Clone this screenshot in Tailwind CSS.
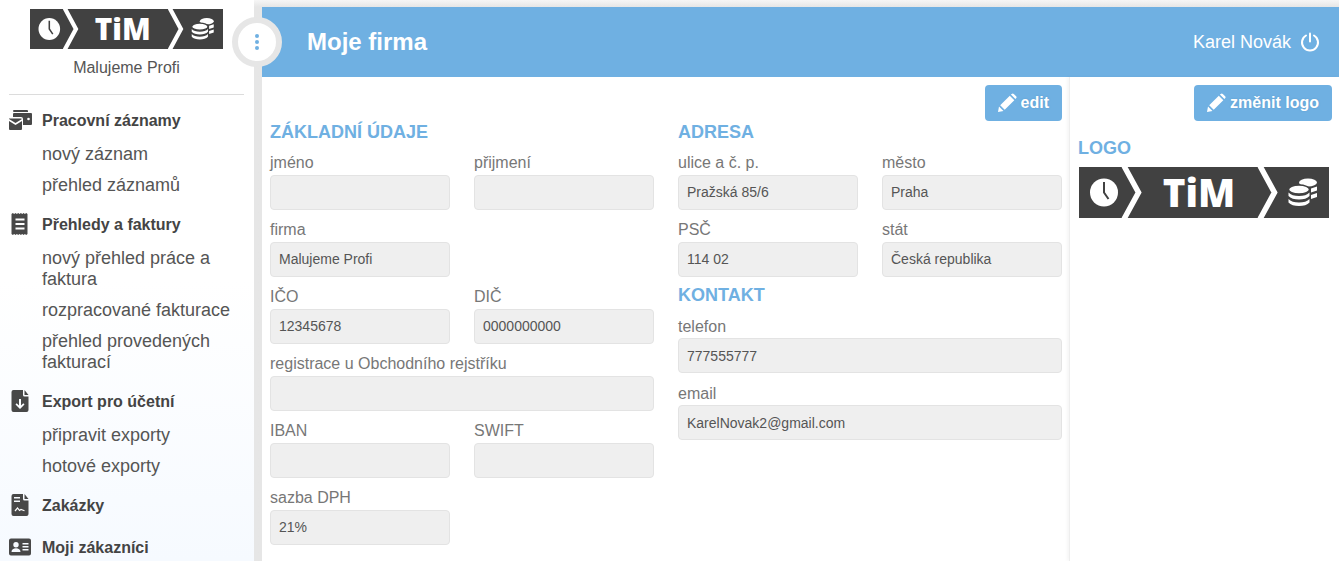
<!DOCTYPE html>
<html lang="cs">
<head>
    <meta charset="UTF-8">
    <meta name="viewport" content="width=device-width, initial-scale=1.0">
    <title>TiM - Moje firma</title>
    <script src="https://cdn.jsdelivr.net/npm/@tailwindcss/browser@4"></script>
</head>
<body class="h-[561px] overflow-hidden bg-[#e8e8e8] font-['Liberation_Sans',Arial,sans-serif]">
    <div class="relative flex h-[561px] overflow-hidden bg-gradient-to-b from-[#f6f6f6] to-[#e6e6e6] to-[7px]">
        <!-- Levý panel -->
        <aside class="w-[254px] shrink-0 h-full overflow-hidden px-[9px] pt-[9px] bg-gradient-to-b from-white from-50% to-[#f6faff] text-[#555]">
            <div class="flex justify-center pr-[1px]">
                <svg class="w-[193px] h-[40px]" viewBox="0 0 250 51" preserveAspectRatio="none">
                    <rect width="250" height="51" fill="#414141"/>
                    <circle cx="25" cy="25.500" r="14" fill="#fff"/>
                    <path d="M25 15v10.500l4.500 6.500" fill="none" stroke="#414141" stroke-width="2"/>
                    <path d="M45 -1l14.500 26.500L45 52M181 -1l14.500 26.500L181 52" fill="none" stroke="#fff" stroke-width="5.500"/>
                    <text x="120" y="40" text-anchor="middle" fill="#fff" font-size="38.500" font-weight="800" font-family="Open Sans">TiM</text>
                    <g fill="#fff">
                        <ellipse cx="229" cy="15.500" rx="9" ry="4"/>
                        <path d="M232 21.500l6-2v4l-6 2zM232 28l6-2v4l-6 2z"/>
                        <ellipse cx="220" cy="22.500" rx="10.500" ry="4.500" stroke="#414141" stroke-width="1.500"/>
                        <path d="M209.500 25.500c2 2.500 6 3.500 10.500 3.500s8.500-1 10.500-3.500v3.500c-2 2.500-6 3.500-10.500 3.500s-8.500-1-10.500-3.500zM209.500 32c2 2.500 6 3.500 10.500 3.500s8.500-1 10.500-3.500v3.500c-2 2.500-6 3.500-10.500 3.500s-8.500-1-10.500-3.500z"/>
                    </g>
                </svg>
            </div>
            <p class="mt-[8px] pr-[1px] text-center text-[16px] leading-[22px]">Malujeme Profi</p>
            <hr class="mt-[15px] mb-[11px] mr-[1px] border-t border-[#dcdcdc]">

            <nav class="-ml-[1px]">
                <section class="mb-[9px]">
                    <h3 class="flex items-center h-[28px] mb-[5px] gap-[10px] text-[16px] font-bold text-[#444]">
                        <svg class="w-[24px] h-[24px] shrink-0" viewBox="0 0 24 24" fill="#484848"><path d="M6 2h13a1 1 0 0 1 1 1v1H6a1 1 0 0 1 0-2z"/><path d="M6 5h17a1 1 0 0 1 1 1v10a1 1 0 0 1-1 1h-8v-6a2 2 0 0 0-2-2H5V6a1 1 0 0 1 1-1z"/><circle cx="20.500" cy="11" r="1.300" fill="#fff"/><path d="M1 10.500h12a1.500 1.500 0 0 1 1 .5L7.500 15 1 11z"/><path d="M1 13l6.500 4L14 13v8a1 1 0 0 1-1 1H2a1 1 0 0 1-1-1z"/></svg>
                        <span class="pt-[2px]">Pracovní záznamy</span>
                    </h3>
                    <ul class="pl-[34px] text-[18px] leading-[21px]">
                        <li class="py-[5px]">nový záznam</li>
                        <li class="py-[5px]">přehled záznamů</li>
                    </ul>
                </section>
                <section class="mb-[9px]">
                    <h3 class="flex items-center h-[28px] mb-[5px] gap-[10px] text-[16px] font-bold text-[#444]">
                        <svg class="w-[24px] h-[24px] shrink-0" viewBox="0 0 24 24" fill="#484848"><path fill-rule="evenodd" d="M3.500 2l1.300-1 1.400 1 1.300-1 1.400 1 1.300-1 1.300 1 1.400-1 1.300 1 1.400-1 1.300 1 1.300-1 1.300 1v20l-1.300 1-1.300-1-1.300 1-1.400-1-1.300 1-1.400-1-1.300 1-1.300-1-1.400 1-1.300-1-1.400 1-1.300-1zM7.500 6.500v2h9v-2zM7.500 11v2h9v-2zM7.500 15.500v2h9v-2z"/></svg>
                        <span class="pt-[2px]">Přehledy a faktury</span>
                    </h3>
                    <ul class="pl-[34px] pr-[10px] text-[18px] leading-[21px]">
                        <li class="py-[5px]">nový přehled práce a faktura</li>
                        <li class="py-[5px]">rozpracované fakturace</li>
                        <li class="py-[5px]">přehled provedených fakturací</li>
                    </ul>
                </section>
                <section class="mb-[9px]">
                    <h3 class="flex items-center h-[28px] mb-[5px] gap-[10px] text-[16px] font-bold text-[#444]">
                        <svg class="w-[24px] h-[24px] shrink-0" viewBox="0 0 24 24" fill="#484848"><path fill-rule="evenodd" d="M5.500 1H15v5a1.500 1.500 0 0 0 1.500 1.500h4V21a2 2 0 0 1-2 2h-13a2 2 0 0 1-2-2V3a2 2 0 0 1 2-2zM11 10v6.500L8.700 14.200l-1.200 1.200 4.500 4.500 4.500-4.500-1.200-1.200-2.300 2.300V10z"/><path d="M16.500 1l4 5h-4z"/></svg>
                        <span class="pt-[2px]">Export pro účetní</span>
                    </h3>
                    <ul class="pl-[34px] text-[18px] leading-[21px]">
                        <li class="py-[5px]">připravit exporty</li>
                        <li class="py-[5px]">hotové exporty</li>
                    </ul>
                </section>
                <section class="mb-[14px]">
                    <h3 class="flex items-center h-[28px] gap-[10px] text-[16px] font-bold text-[#444]">
                        <svg class="w-[24px] h-[24px] shrink-0" viewBox="0 0 24 24" fill="#484848"><path fill-rule="evenodd" d="M5.500 1H15v5a1.500 1.500 0 0 0 1.500 1.500h4V21a2 2 0 0 1-2 2h-13a2 2 0 0 1-2-2V3a2 2 0 0 1 2-2zM6 4v1.500h6V4zM6 7.500V9h6V7.500z"/><path d="M16.500 1l4 5h-4z"/><path d="M7 18l2.500-3 2 2.500 1.500-1 3.500 1.200" fill="none" stroke="#fff" stroke-width="1.200"/></svg>
                        <span class="pt-[2px]">Zakázky</span>
                    </h3>
                </section>
                <section>
                    <h3 class="flex items-center h-[28px] gap-[10px] text-[16px] font-bold text-[#444]">
                        <svg class="w-[24px] h-[24px] shrink-0" viewBox="0 0 24 24" fill="#484848"><path fill-rule="evenodd" d="M3 3.500h18a2 2 0 0 1 2 2v13a2 2 0 0 1-2 2H3a2 2 0 0 1-2-2v-13a2 2 0 0 1 2-2zM8 7a2.700 2.700 0 1 0 0 5.400A2.700 2.700 0 0 0 8 7zM3.500 17h9c0-2.500-2-3.700-4.500-3.700S3.500 14.500 3.500 17zM14.500 8v1.500h6V8zM14.500 11v1.500h6V11zM14.500 14v1.500h6V14z"/></svg>
                        <span class="pt-[2px]">Moji zákazníci</span>
                    </h3>
                </section>
            </nav>
        </aside>

        <!-- Přepínač panelu -->
        <button class="absolute left-[232px] top-[17px] flex flex-col items-center justify-center gap-[2px] w-[50px] h-[50px] rounded-full bg-white border-[6px] border-[#e6e6e6]">
            <span class="w-[4px] h-[4px] rounded-full bg-[#6fb0e2]"></span>
            <span class="w-[4px] h-[4px] rounded-full bg-[#6fb0e2]"></span>
            <span class="w-[4px] h-[4px] rounded-full bg-[#6fb0e2]"></span>
        </button>

        <!-- Hlavní obsah -->
        <main class="flex-1 ml-[8px] mt-[7px] flex flex-col bg-white min-w-0">
            <header class="h-[70px] shrink-0 flex items-center justify-between bg-[#6fb0e2] pl-[45px] pr-[19px] text-white">
                <h1 class="text-[24px] font-bold">Moje firma</h1>
                <div class="flex items-center gap-[9px]">
                    <span class="text-[18px]">Karel Novák</span>
                    <svg class="w-[20px] h-[20px]" viewBox="0 0 20 20" fill="none" stroke="#fff" stroke-width="2" stroke-linecap="round"><path d="M10 1.500v8"/><path d="M6 3.500a8 8 0 1 0 8 0"/></svg>
                </div>
            </header>

            <div class="flex flex-1 min-h-0">
                <div class="w-[807px] shrink-0 pl-[8px] pr-[7px] pt-[8px] text-[16px] text-[#777]">
                    <div class="flex justify-end">
                        <button class="flex items-center gap-[4px] h-[36px] pl-[12px] pr-[13px] rounded-[4px] bg-[#6fb0e2] text-white text-[16px] font-bold [text-shadow:0_0_2px_#5a9bcc]">
                            <svg class="w-[20px] h-[20px]" viewBox="0 0 20 20" fill="#fff"><path d="M1 19l1-5.500 4.500 4.500zM3.200 12.300L12.800 2.700l4.500 4.500-9.600 9.600zM13.900 1.600l.8-.7a1.500 1.500 0 0 1 2.100 0l2.300 2.300a1.500 1.500 0 0 1 0 2.100l-.7.800z"/></svg>
                            edit
                        </button>
                    </div>
                    <div class="grid grid-cols-2 gap-x-[24px]">
                        <!-- Základní údaje -->
                        <div>
                            <h2 class="text-[18px] leading-[22px] font-bold text-[#6fb0e2]">ZÁKLADNÍ ÚDAJE</h2>
                            <div class="grid grid-cols-2 gap-x-[24px]">
                                <label class="block"><span class="block pt-[9px] pb-[1px] leading-[22px]">jméno</span><input readonly class="block w-full h-[35px] px-[8px] pb-[2px] rounded-[4px] border border-[#e3e3e3] bg-[#efefef] text-[14px] text-[#555]"></label>
                                <label class="block"><span class="block pt-[9px] pb-[1px] leading-[22px]">přijmení</span><input readonly class="block w-full h-[35px] px-[8px] pb-[2px] rounded-[4px] border border-[#e3e3e3] bg-[#efefef] text-[14px] text-[#555]"></label>
                                <label class="block"><span class="block pt-[9px] pb-[1px] leading-[22px]">firma</span><input readonly value="Malujeme Profi" class="block w-full h-[35px] px-[8px] pb-[2px] rounded-[4px] border border-[#e3e3e3] bg-[#efefef] text-[14px] text-[#555]"></label>
                                <div></div>
                                <label class="block"><span class="block pt-[9px] pb-[1px] leading-[22px]">IČO</span><input readonly value="12345678" class="block w-full h-[35px] px-[8px] pb-[2px] rounded-[4px] border border-[#e3e3e3] bg-[#efefef] text-[14px] text-[#555]"></label>
                                <label class="block"><span class="block pt-[9px] pb-[1px] leading-[22px]">DIČ</span><input readonly value="0000000000" class="block w-full h-[35px] px-[8px] pb-[2px] rounded-[4px] border border-[#e3e3e3] bg-[#efefef] text-[14px] text-[#555]"></label>
                                <label class="block col-span-2"><span class="block pt-[9px] pb-[1px] leading-[22px]">registrace u Obchodního rejstříku</span><input readonly class="block w-full h-[35px] px-[8px] pb-[2px] rounded-[4px] border border-[#e3e3e3] bg-[#efefef] text-[14px] text-[#555]"></label>
                                <label class="block"><span class="block pt-[9px] pb-[1px] leading-[22px]">IBAN</span><input readonly class="block w-full h-[35px] px-[8px] pb-[2px] rounded-[4px] border border-[#e3e3e3] bg-[#efefef] text-[14px] text-[#555]"></label>
                                <label class="block"><span class="block pt-[9px] pb-[1px] leading-[22px]">SWIFT</span><input readonly class="block w-full h-[35px] px-[8px] pb-[2px] rounded-[4px] border border-[#e3e3e3] bg-[#efefef] text-[14px] text-[#555]"></label>
                                <label class="block"><span class="block pt-[9px] pb-[1px] leading-[22px]">sazba DPH</span><input readonly value="21%" class="block w-full h-[35px] px-[8px] pb-[2px] rounded-[4px] border border-[#e3e3e3] bg-[#efefef] text-[14px] text-[#555]"></label>
                            </div>
                        </div>
                        <!-- Adresa a kontakt -->
                        <div>
                            <h2 class="text-[18px] leading-[22px] font-bold text-[#6fb0e2]">ADRESA</h2>
                            <div class="grid grid-cols-2 gap-x-[24px]">
                                <label class="block"><span class="block pt-[9px] pb-[1px] leading-[22px]">ulice a č. p.</span><input readonly value="Pražská 85/6" class="block w-full h-[35px] px-[8px] pb-[2px] rounded-[4px] border border-[#e3e3e3] bg-[#efefef] text-[14px] text-[#555]"></label>
                                <label class="block"><span class="block pt-[9px] pb-[1px] leading-[22px]">město</span><input readonly value="Praha" class="block w-full h-[35px] px-[8px] pb-[2px] rounded-[4px] border border-[#e3e3e3] bg-[#efefef] text-[14px] text-[#555]"></label>
                                <label class="block"><span class="block pt-[9px] pb-[1px] leading-[22px]">PSČ</span><input readonly value="114 02" class="block w-full h-[35px] px-[8px] pb-[2px] rounded-[4px] border border-[#e3e3e3] bg-[#efefef] text-[14px] text-[#555]"></label>
                                <label class="block"><span class="block pt-[9px] pb-[1px] leading-[22px]">stát</span><input readonly value="Česká republika" class="block w-full h-[35px] px-[8px] pb-[2px] rounded-[4px] border border-[#e3e3e3] bg-[#efefef] text-[14px] text-[#555]"></label>
                            </div>
                            <h2 class="mt-[7px] text-[18px] leading-[22px] font-bold text-[#6fb0e2]">KONTAKT</h2>
                            <label class="block"><span class="block pt-[10px] leading-[22px]">telefon</span><input readonly value="777555777" class="block w-full h-[35px] px-[8px] rounded-[4px] border border-[#e3e3e3] bg-[#efefef] text-[14px] text-[#555]"></label>
                            <label class="block"><span class="block pt-[10px] leading-[22px]">email</span><input readonly value="KarelNovak2@gmail.com" class="block w-full h-[35px] px-[8px] rounded-[4px] border border-[#e3e3e3] bg-[#efefef] text-[14px] text-[#555]"></label>
                        </div>
                    </div>
                </div>

                <!-- Logo -->
                <div class="flex-1 border-l border-[#eeeeee] shadow-[-2px_0_3px_rgba(0,0,0,0.04)] pl-[9px] pr-[7px] pt-[8px]">
                    <div class="flex justify-end">
                        <button class="flex items-center gap-[4px] h-[36px] pl-[12px] pr-[13px] rounded-[4px] bg-[#6fb0e2] text-white text-[16px] font-bold [text-shadow:0_0_2px_#5a9bcc]">
                            <svg class="w-[20px] h-[20px]" viewBox="0 0 20 20" fill="#fff"><path d="M1 19l1-5.500 4.500 4.500zM3.200 12.300L12.800 2.700l4.500 4.500-9.600 9.600zM13.900 1.600l.8-.7a1.500 1.500 0 0 1 2.100 0l2.300 2.300a1.500 1.500 0 0 1 0 2.100l-.7.800z"/></svg>
                            změnit logo
                        </button>
                    </div>
                    <h2 class="mt-[16px] -ml-px text-[18px] leading-[22px] font-bold text-[#6fb0e2]">LOGO</h2>
                    <svg class="mt-[8px] w-[250px] h-[51px]" viewBox="0 0 250 51">
                        <rect width="250" height="51" fill="#414141"/>
                        <circle cx="25" cy="25.500" r="14" fill="#fff"/>
                        <path d="M25 15v10.500l4.500 6.500" fill="none" stroke="#414141" stroke-width="2"/>
                        <path d="M45 -1l14.500 26.500L45 52M181 -1l14.500 26.500L181 52" fill="none" stroke="#fff" stroke-width="5.500"/>
                        <text x="120" y="40" text-anchor="middle" fill="#fff" font-size="38.500" font-weight="800" font-family="Open Sans">TiM</text>
                        <g fill="#fff">
                            <ellipse cx="229" cy="15.500" rx="9" ry="4"/>
                            <path d="M232 21.500l6-2v4l-6 2zM232 28l6-2v4l-6 2z"/>
                            <ellipse cx="220" cy="22.500" rx="10.500" ry="4.500" stroke="#414141" stroke-width="1.500"/>
                            <path d="M209.500 25.500c2 2.500 6 3.500 10.500 3.500s8.500-1 10.500-3.500v3.500c-2 2.500-6 3.500-10.500 3.500s-8.500-1-10.500-3.500zM209.500 32c2 2.500 6 3.500 10.500 3.500s8.500-1 10.500-3.500v3.500c-2 2.500-6 3.500-10.500 3.500s-8.500-1-10.500-3.500z"/>
                        </g>
                    </svg>
                </div>
            </div>
        </main>
    </div>
</body>
</html>
